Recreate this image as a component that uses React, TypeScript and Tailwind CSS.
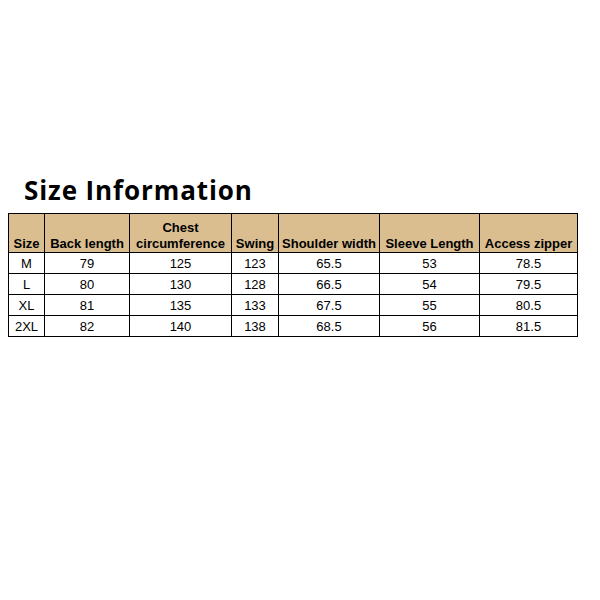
import React from "react";

const cols = [
  { label: ["", "Size"], w: 36 },
  { label: ["", "Back length"], w: 85 },
  { label: ["Chest", "circumference"], w: 102 },
  { label: ["", "Swing"], w: 47 },
  { label: ["", "Shoulder width"], w: 101 },
  { label: ["", "Sleeve Length"], w: 100 },
  { label: ["", "Access zipper"], w: 98 },
];

const rows = [
  ["M", "79", "125", "123", "65.5", "53", "78.5"],
  ["L", "80", "130", "128", "66.5", "54", "79.5"],
  ["XL", "81", "135", "133", "67.5", "55", "80.5"],
  ["2XL", "82", "140", "138", "68.5", "56", "81.5"],
];

export default function App() {
  return (
    <div className="w-[600px] h-[600px] bg-white pt-[173px] pl-[8px]">
      <h1 className="pl-[16px] text-[26px] leading-[34px] font-bold text-black tracking-[0.9px] [font-family:'Open_Sans',sans-serif]">
        Size Information
      </h1>
      <table className="mt-[6px] border-collapse table-fixed [font-family:'Liberation_Sans',Arial,sans-serif] text-black">
        <colgroup>
          {cols.map((c, i) => (
            <col key={i} style={{ width: c.w }} />
          ))}
        </colgroup>
        <thead>
          <tr className="bg-[#dabe90] h-[39px]">
            {cols.map((c, i) => (
              <th
                key={i}
                className="border border-black align-bottom text-center font-bold text-[13px] leading-[16px] px-0 pb-0 whitespace-nowrap"
              >
                {c.label[0] && <div>{c.label[0]}</div>}
                <div>{c.label[1]}</div>
              </th>
            ))}
          </tr>
        </thead>
        <tbody>
          {rows.map((r, i) => (
            <tr key={i} className="h-[21px]">
              {r.map((v, j) => (
                <td
                  key={j}
                  className="border border-black text-center text-[13px] leading-[15px] pt-[1px] pb-0 px-0"
                >
                  {v}
                </td>
              ))}
            </tr>
          ))}
        </tbody>
      </table>
    </div>
  );
}
